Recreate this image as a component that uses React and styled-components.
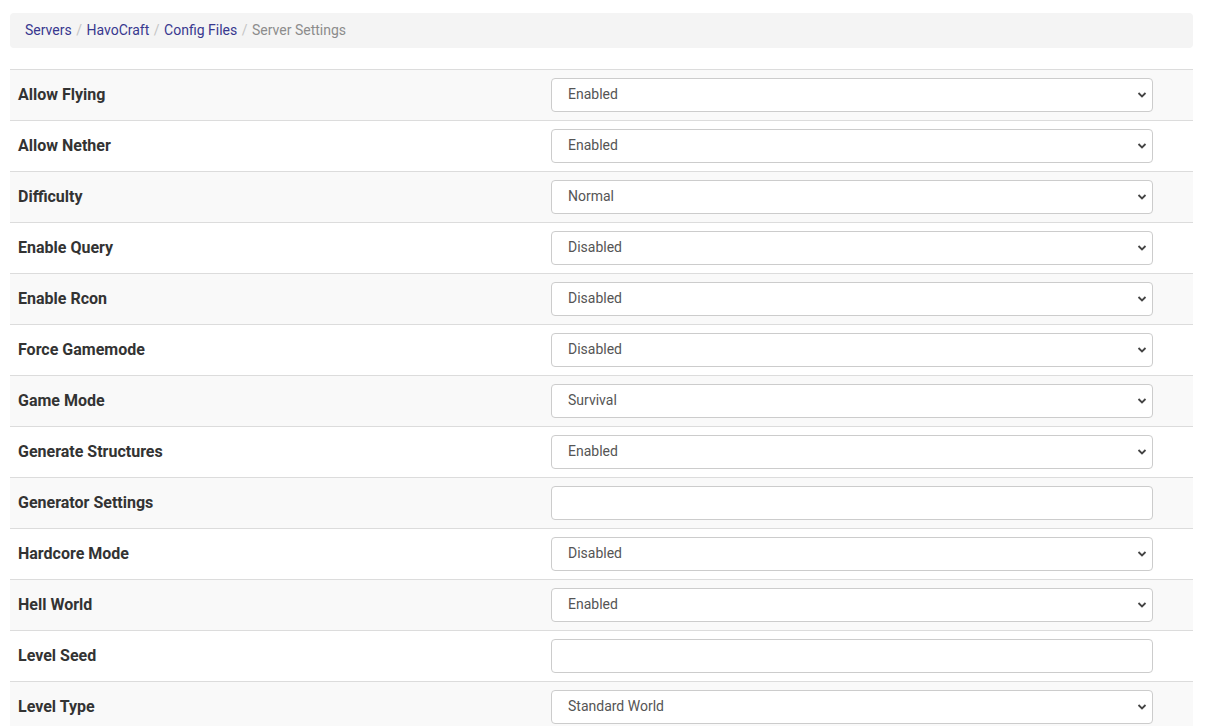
import React from "react";
import styled, { createGlobalStyle } from "styled-components";

const GlobalStyle = createGlobalStyle`
  body {
    margin: 0;
    background: #fff;
    font-family: Roboto, "Liberation Sans", sans-serif;
    color: #333;
  }
`;

const Page = styled.div`
  padding: 13px 13px 0 10px;
`;

const Crumbs = styled.ol`
  display: flex;
  align-items: center;
  list-style: none;
  margin: 0 0 21px;
  padding: 0 15px 1px;
  height: 35px;
  box-sizing: border-box;
  background: #f4f4f4;
  border-radius: 4px;
  font-size: 14px;
`;

const Crumb = styled.li`
  color: ${(p) => (p.$active ? "#8c8c8c" : "#38388f")};
  &:not(:first-child)::before {
    content: "/";
    color: #c4c4c4;
    padding: 0 4.5px;
  }
`;

const Table = styled.div`
  border-top: 1px solid #dcdcdc;
`;

const Row = styled.div`
  display: grid;
  grid-template-columns: 533px 1fr;
  align-items: center;
  height: 50px;
  border-bottom: 1px solid #dcdcdc;
  background: ${(p) => (p.$striped ? "#f9f9f9" : "#fff")};
`;

const Label = styled.div`
  padding: 0 8px 2px;
  font-weight: 700;
  font-size: 16px;
  color: #333;
`;

const Cell = styled.div`
  padding: 0 8px;
`;

const Field = styled.div`
  position: relative;
  width: 602px;
  height: 34px;
`;

const Select = styled.select`
  appearance: none;
  width: 100%;
  height: 100%;
  box-sizing: border-box;
  border: 1px solid #cccccc;
  border-radius: 4px;
  background: #fff;
  padding: 0 30px 2px 16px;
  font-family: Roboto, "Liberation Sans", sans-serif;
  font-size: 14px;
  color: #555;
  outline: none;
`;

const Input = styled.input`
  width: 100%;
  height: 100%;
  box-sizing: border-box;
  border: 1px solid #cccccc;
  border-radius: 4px;
  background: #fff;
  padding: 0 16px;
  font-family: Roboto, "Liberation Sans", sans-serif;
  font-size: 14px;
  color: #555;
  outline: none;
`;

const Caret = styled.svg`
  position: absolute;
  right: 6px;
  top: 13px;
  pointer-events: none;
`;

const rows = [
  ["Allow Flying", "Enabled"],
  ["Allow Nether", "Enabled"],
  ["Difficulty", "Normal"],
  ["Enable Query", "Disabled"],
  ["Enable Rcon", "Disabled"],
  ["Force Gamemode", "Disabled"],
  ["Game Mode", "Survival"],
  ["Generate Structures", "Enabled"],
  ["Generator Settings", null],
  ["Hardcore Mode", "Disabled"],
  ["Hell World", "Enabled"],
  ["Level Seed", null],
  ["Level Type", "Standard World"],
];

export default function App() {
  return (
    <Page>
      <GlobalStyle />
      <Crumbs>
        <Crumb>Servers</Crumb>
        <Crumb>HavoCraft</Crumb>
        <Crumb>Config Files</Crumb>
        <Crumb $active>Server Settings</Crumb>
      </Crumbs>
      <Table>
        {rows.map(([label, value], i) => (
          <Row key={label} $striped={i % 2 === 0}>
            <Label>{label}</Label>
            <Cell>
              <Field>
                {value === null ? (
                  <Input type="text" defaultValue="" />
                ) : (
                  <>
                    <Select defaultValue={value}>
                      <option>{value}</option>
                    </Select>
                    <Caret width="10" height="8" viewBox="0 0 10 8">
                      <path d="M1.5 2 L5 5.5 L8.5 2" fill="none" stroke="#444" strokeWidth="1.8" />
                    </Caret>
                  </>
                )}
              </Field>
            </Cell>
          </Row>
        ))}
      </Table>
    </Page>
  );
}
